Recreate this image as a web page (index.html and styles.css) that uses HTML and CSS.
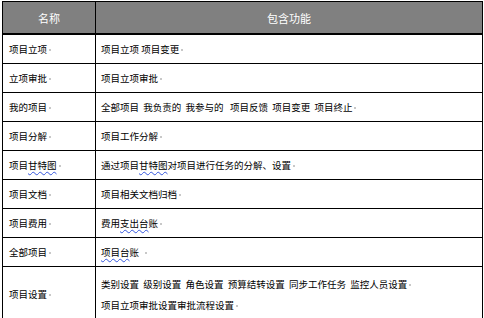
FILE: index.html
```html
<!DOCTYPE html>
<html lang="zh">
<head>
<meta charset="utf-8">
<link rel="stylesheet" href="styles.css">
</head>
<body>
<table class="grid">
  <thead>
    <tr><th class="c1">名称</th><th class="c2">包含功能</th></tr>
  </thead>
  <tbody>
    <tr><td class="c1">项目立项<i class="pm"></i></td><td class="c2">项目立项&nbsp;项目变更<i class="pm"></i></td></tr>
    <tr><td class="c1">立项审批<i class="pm"></i></td><td class="c2">项目立项审批<i class="pm"></i></td></tr>
    <tr><td class="c1">我的项目<i class="pm"></i></td><td class="c2">全部项目&nbsp;&nbsp;我负责的&nbsp;&nbsp;我参与的&nbsp;&nbsp;&nbsp;项目反馈&nbsp;&nbsp;项目变更&nbsp;&nbsp;项目终止<i class="pm"></i></td></tr>
    <tr><td class="c1">项目分解<i class="pm"></i></td><td class="c2">项目工作分解<i class="pm"></i></td></tr>
    <tr><td class="c1">项目<span class="sp">甘特图</span><i class="pm"></i></td><td class="c2">通过项目<span class="sp">甘特图</span>对项目进行任务的分解、设置<i class="pm"></i></td></tr>
    <tr><td class="c1">项目文档<i class="pm"></i></td><td class="c2">项目相关文档归档<i class="pm"></i></td></tr>
    <tr><td class="c1">项目费用<i class="pm"></i></td><td class="c2">费用<span class="sp">支出台</span>账<i class="pm"></i></td></tr>
    <tr><td class="c1">全部项目<i class="pm"></i></td><td class="c2"><span class="sp">项目台</span>账&nbsp;&nbsp;<i class="pm"></i></td></tr>
    <tr class="last"><td class="c1">项目设置<i class="pm"></i></td><td class="c2"><p class="ln">类别设置&nbsp;&nbsp;级别设置&nbsp;&nbsp;角色设置&nbsp;&nbsp;预算结转设置&nbsp;&nbsp;同步工作任务&nbsp;&nbsp;监控人员设置<i class="pm"></i></p><p class="ln">项目立项审批设置审批流程设置<i class="pm"></i></p></td></tr>
  </tbody>
</table>
</body>
</html>
```
FILE: styles.css
```css
html, body {
  margin: 0;
  padding: 0;
  background: #ffffff;
}
body {
  padding: 1px 0 0 2px;
  font-family: "Noto Sans CJK SC", "Noto Sans", sans-serif;
  color: #000;
}
.grid {
  width: 481px;
  border-collapse: collapse;
  table-layout: fixed;
}
.grid th {
  background: #808080;
  color: #ffffff;
  font-weight: normal;
  font-size: 11px;
  height: 31px;
  padding: 0;
  border: 1px solid #000;
  border-bottom: 2px solid #000;
  text-align: center;
}
.grid th.c1 { width: 92px; }
.grid td {
  border: 1px solid #000;
  height: 28px;
  padding: 0;
  font-size: 9.5px;
  line-height: 12px;
  vertical-align: middle;
  white-space: nowrap;
}
.grid td.c1 { padding-left: 6px; }
.grid td.c2 { padding-left: 5px; }
.grid tr.last td { height: 54px; border-bottom: none; }
.ln { margin: 0; padding: 3px 0; }
.ln + .ln { padding-top: 6px; }
.pm {
  display: inline-block;
  width: 2px;
  height: 2px;
  margin-left: 2px;
  background: #c8c8c8;
  vertical-align: middle;
}
.sp {
  text-decoration: underline wavy #3355dd;
  text-decoration-thickness: 1px;
  text-underline-offset: 2px;
}
```
